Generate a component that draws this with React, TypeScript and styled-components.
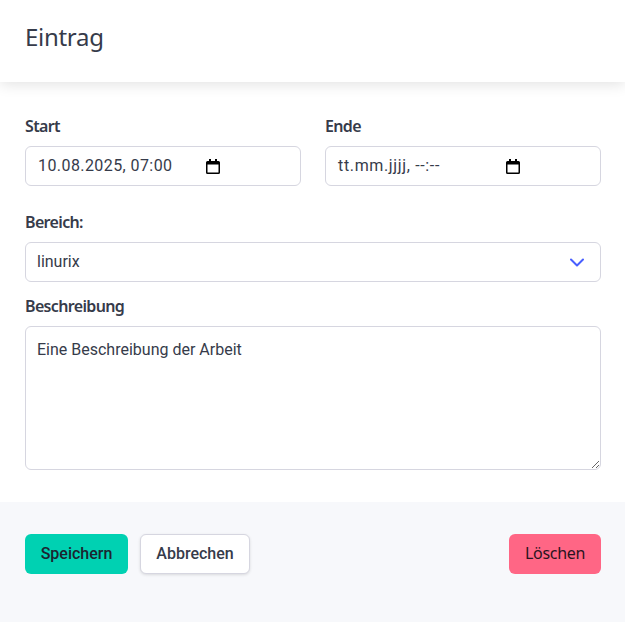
import React from "react";
import styled, { createGlobalStyle } from "styled-components";

const Global = createGlobalStyle`
  html, body { margin: 0; padding: 0; background: #fff; }
  * { box-sizing: border-box; }
  body { font-family: Roboto, "Liberation Sans", sans-serif; color: #363b4a; font-size: 16px; }
`;
const Card = styled.div`width: 625px; height: 622px; display: flex; flex-direction: column; background: #fff; overflow: hidden;`;
const Header = styled.header`height: 82px; display: flex; align-items: center; padding: 0 25px 8px; background: #fff; box-shadow: 0 2px 14px rgba(10,10,10,.12); position: relative;`;
const Title = styled.h1`margin: 0; font: 400 24px/30px "Noto Sans", sans-serif; letter-spacing: -.3px; color: #363b4a;`;
const Body = styled.section`flex: 1; padding: 32px 24px 0 25px; display: flex; flex-direction: column;`;
const Row = styled.div`display: grid; grid-template-columns: 276px 276px; column-gap: 24px; margin-bottom: 24px;`;
const Field = styled.div`display: flex; flex-direction: column;`;
const Label = styled.label`font: 600 16px/24px "Noto Sans", sans-serif; color: #363b4a; margin-bottom: 8px; letter-spacing: -.65px;`;
const DateBox = styled.div<{ $spacing: number }>`height: 40px; border: 1px solid #d6d6e0; border-radius: 6px; padding: 0 0 1px 12px; font: 400 16px Roboto, sans-serif; letter-spacing: ${p => p.$spacing}px; color: #363b4a; background: #fff; display: flex; align-items: center; position: relative;`;
const CalendarIcon = styled.svg`position: absolute; left: 180px; top: 12px; width: 14px; height: 15px;`;
const SelectBox = styled.div`height: 40px; border: 1px solid #d6d6e0; border-radius: 6px; padding: 0 15px 2px 11px; display: flex; align-items: center; justify-content: space-between; font: 400 16px Roboto, sans-serif; margin-bottom: 12px;`;
const Chevron = styled.svg`width: 14px; height: 9px; margin-top: 2px; margin-right: 1px; color: #485fff;`;
const Area = styled.textarea`width: 100%; height: 144px; border: 1px solid #d6d6e0; border-radius: 6px; padding: 11px; font: 400 16px/24px Roboto, sans-serif; color: #363b4a; resize: vertical; display: block;`;
const Footer = styled.footer`height: 120px; background: #f7f8fb; padding: 32px 24px 0 25px; display: flex; gap: 12px; align-items: flex-start;`;
const Button = styled.button<{ $width: number; $bg: string; $border?: string; $push?: boolean }>`width: ${p => p.$width}px; height: 40px; padding: 0 0 2px; border-radius: 6px; border: 1px solid ${p => p.$border || "transparent"}; background: ${p => p.$bg}; color: ${p => p.$border ? "#363b4a" : "#1c2430"}; font: 500 16px Roboto, sans-serif; ${p => p.$push ? "margin-left: auto;" : ""} ${p => p.$border ? "box-shadow: 0 1px 3px rgba(10,10,10,.12);" : ""}`;
const DangerButton = styled(Button)`font: 400 16px "Noto Sans", sans-serif; letter-spacing: -.3px; color: #2a1420;`;

const Calendar = () => (
  <CalendarIcon viewBox="0 0 14 15">
    <path fill="#000" d="M3 0h2v2h4V0h2v2h1.5A1.5 1.5 0 0 1 14 3.5v10a1.5 1.5 0 0 1-1.5 1.5h-11A1.5 1.5 0 0 1 0 13.500v-10A1.500 1.500 0 0 1 1.500 2H3zM1.500 5.500v8h11v-8z" />
  </CalendarIcon>
);

export default function App() {
  return (
    <>
      <Global />
      <Card>
        <Header><Title>Eintrag</Title></Header>
        <Body>
          <Row>
            <Field><Label>Start</Label><DateBox $spacing={0.42}>10.08.2025, 07:00<Calendar /></DateBox></Field>
            <Field><Label>Ende</Label><DateBox $spacing={0.65}>tt.mm.jjjj, --:--<Calendar /></DateBox></Field>
          </Row>
          <Label>Bereich:</Label>
          <SelectBox>linurix
            <Chevron viewBox="0 0 14 9" fill="none" stroke="currentColor" strokeWidth="2" strokeLinecap="round" strokeLinejoin="round"><path d="M1 1.500l6 6 6-6" /></Chevron>
          </SelectBox>
          <Label>Beschreibung</Label>
          <Area defaultValue="Eine Beschreibung der Arbeit" />
        </Body>
        <Footer>
          <Button $width={103} $bg="#00d1b2">Speichern</Button>
          <Button $width={110} $bg="#fff" $border="#d6d6e0">Abbrechen</Button>
          <DangerButton $width={92} $bg="#ff6685" $push>Löschen</DangerButton>
        </Footer>
      </Card>
    </>
  );
}
